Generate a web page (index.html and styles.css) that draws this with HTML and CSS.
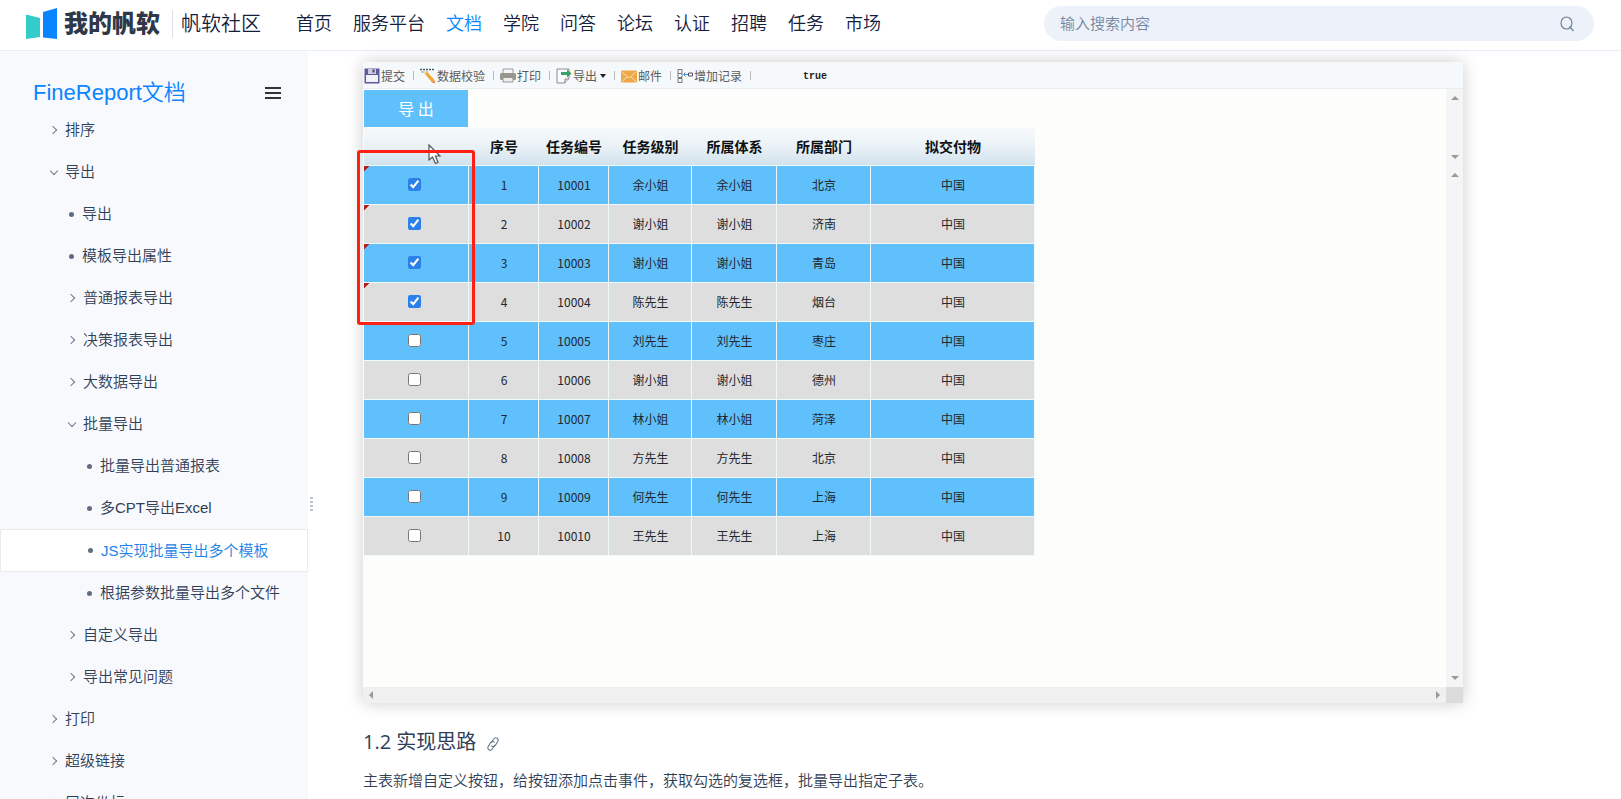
FILE: index.html
```html
<!DOCTYPE html>
<html lang="zh-CN">
<head>
<meta charset="utf-8">
<title>JS实现批量导出多个模板 - FineReport文档</title>
<link rel="stylesheet" href="styles.css">
</head>
<body>
<header class="topbar">
  <a class="brand" href="#">
    <svg class="brand-mark" width="32" height="32" viewBox="0 0 32 32" aria-hidden="true"><path d="M0 6.500L14 10V29L0 31Z" fill="#33cccb"/><path d="M17 4L31 0V31L17 29.500Z" fill="#0a84ff"/></svg>
    <span class="brand-name">我的帆软</span>
  </a>
  <a class="community" href="#">帆软社区</a>
  <nav class="nav">
    <a href="#">首页</a><a href="#">服务平台</a><a class="is-current" href="#">文档</a><a href="#">学院</a><a href="#">问答</a><a href="#">论坛</a><a href="#">认证</a><a href="#">招聘</a><a href="#">任务</a><a href="#">市场</a>
  </nav>
  <form class="search">
    <input type="text" placeholder="输入搜索内容" aria-label="输入搜索内容">
    <button type="button" aria-label="搜索"><svg width="14" height="16" viewBox="0 0 14 16" fill="none" stroke="#708299" stroke-width="1.200"><ellipse cx="6.500" cy="7" rx="5.500" ry="6"/><path d="M9.500 10.500L13.500 15"/></svg></button>
  </form>
</header>
<div class="page">
  <aside class="sidebar">
    <div class="side-head">
      <a class="side-title" href="#">FineReport文档</a>
      <button class="menu-btn" type="button" aria-label="菜单"><i></i><i></i><i></i></button>
    </div>
    <ul class="tree">
      <li><a class="node closed" href="#">排序</a></li>
      <li><a class="node open" href="#">导出</a>
        <ul>
          <li><a class="node leaf" href="#">导出</a></li>
          <li><a class="node leaf" href="#">模板导出属性</a></li>
          <li><a class="node closed" href="#">普通报表导出</a></li>
          <li><a class="node closed" href="#">决策报表导出</a></li>
          <li><a class="node closed" href="#">大数据导出</a></li>
          <li><a class="node open" href="#">批量导出</a>
            <ul>
              <li><a class="node leaf" href="#">批量导出普通报表</a></li>
              <li><a class="node leaf" href="#">多CPT导出Excel</a></li>
              <li><a class="node leaf is-active" href="#">JS实现批量导出多个模板</a></li>
              <li><a class="node leaf" href="#">根据参数批量导出多个文件</a></li>
            </ul>
          </li>
          <li><a class="node closed" href="#">自定义导出</a></li>
          <li><a class="node closed" href="#">导出常见问题</a></li>
        </ul>
      </li>
      <li><a class="node closed" href="#">打印</a></li>
      <li><a class="node closed" href="#">超级链接</a></li>
      <li><a class="node closed" href="#">层次坐标</a></li>
    </ul>
    <div class="grip"><i></i><i></i><i></i><i></i></div>
  </aside>
  <main class="content">
    <section class="frame">
      <div class="toolbar">
        <button type="button"><svg width="16" height="16" viewBox="0 0 16 16"><path d="M0.500 0.500h15v15h-15z" fill="#5d5b9a"/><path d="M2 7h12v7H2z" fill="#f1f2f8"/><path d="M4 1h8v5H4z" fill="#c9cbe2"/><path d="M8.500 1.500h2v3h-2z" fill="#45437f"/></svg>提交</button>
        <span class="sep"></span>
        <button type="button"><svg width="16" height="16" viewBox="0 0 16 16"><path d="M0 1.500h15" stroke="#45606e" stroke-width="1.500" stroke-dasharray="2 1"/><path d="M1 4h7" stroke="#5aa6d8"/><path d="M3 3.500L6 2.500L14.500 12L12 14.500Z" fill="#f0a838"/><path d="M3 3.500L6 2.500L7 4L4.500 6Z" fill="#f6dcae"/><path d="M12 14.500L14.500 12L15 15.500Z" fill="#e27b4c"/></svg>数据校验</button>
        <span class="sep"></span>
        <button type="button"><svg width="16" height="16" viewBox="0 0 16 16"><path d="M3 1h10v6H3z" fill="#f5f5f5" stroke="#9b9b94"/><rect y="5" width="16" height="7" rx="1.500" fill="#97978f"/><path d="M3 9.500h10V14H3z" fill="#eee" stroke="#97978f"/></svg>打印</button>
        <span class="sep"></span>
        <button type="button"><svg width="16" height="16" viewBox="0 0 16 16"><path d="M1 1h12v9l-4 5H1z" fill="#fafafa" stroke="#8b8b8b"/><path d="M9 15v-4h4" fill="#ddd" stroke="#8b8b8b"/><path d="M5 4h6V1.500L15.500 5.500L11 9.500V7H5z" fill="#35a068"/></svg>导出<svg class="caret" width="6" height="4" viewBox="0 0 6 4"><path d="M0 0h6L3 4z" fill="#222"/></svg></button>
        <span class="sep"></span>
        <button type="button"><svg width="16" height="16" viewBox="0 0 16 16"><rect y="2.500" width="16" height="12" rx="1" fill="#eea847"/><path d="M1 4L8 10L15 4M1 13.500L6 9M15 13.500L10 9" fill="none" stroke="#fbe2b8"/></svg>邮件</button>
        <span class="sep"></span>
        <button type="button"><svg width="16" height="16" viewBox="0 0 16 16" fill="none"><path d="M1 1.500h4v4H1zM1 5.500h4v4H1zM1 10.500h4v4H1z" stroke="#777"/><path d="M7 6.500h4M8.500 4.500L6.500 6.500L8.500 8.500" stroke="#3a8fdc"/><path d="M11.500 5h4v3h-4z" stroke="#556"/></svg>增加记录</button>
        <span class="sep"></span>
        <code class="flag">true</code>
      </div>
      <div class="report">
        <div class="sheet">
          <button class="export" type="button">导 出</button>
          <table class="grid">
            <colgroup><col class="c-pick"><col class="c-num"><col class="c-num"><col class="c-level"><col class="c-sys"><col class="c-dept"><col class="c-item"></colgroup>
            <thead><tr><th></th><th>序号</th><th>任务编号</th><th>任务级别</th><th>所属体系</th><th>所属部门</th><th>拟交付物</th></tr></thead>
            <tbody>
              <tr><td class="marked"><input type="checkbox" aria-label="选择 1" checked></td><td>1</td><td>10001</td><td>余小姐</td><td>余小姐</td><td>北京</td><td>中国</td></tr>
              <tr><td class="marked"><input type="checkbox" aria-label="选择 2" checked></td><td>2</td><td>10002</td><td>谢小姐</td><td>谢小姐</td><td>济南</td><td>中国</td></tr>
              <tr><td class="marked"><input type="checkbox" aria-label="选择 3" checked></td><td>3</td><td>10003</td><td>谢小姐</td><td>谢小姐</td><td>青岛</td><td>中国</td></tr>
              <tr><td class="marked"><input type="checkbox" aria-label="选择 4" checked></td><td>4</td><td>10004</td><td>陈先生</td><td>陈先生</td><td>烟台</td><td>中国</td></tr>
              <tr><td><input type="checkbox" aria-label="选择 5"></td><td>5</td><td>10005</td><td>刘先生</td><td>刘先生</td><td>枣庄</td><td>中国</td></tr>
              <tr><td><input type="checkbox" aria-label="选择 6"></td><td>6</td><td>10006</td><td>谢小姐</td><td>谢小姐</td><td>德州</td><td>中国</td></tr>
              <tr><td><input type="checkbox" aria-label="选择 7"></td><td>7</td><td>10007</td><td>林小姐</td><td>林小姐</td><td>菏泽</td><td>中国</td></tr>
              <tr><td><input type="checkbox" aria-label="选择 8"></td><td>8</td><td>10008</td><td>方先生</td><td>方先生</td><td>北京</td><td>中国</td></tr>
              <tr><td><input type="checkbox" aria-label="选择 9"></td><td>9</td><td>10009</td><td>何先生</td><td>何先生</td><td>上海</td><td>中国</td></tr>
              <tr><td><input type="checkbox" aria-label="选择 10"></td><td>10</td><td>10010</td><td>王先生</td><td>王先生</td><td>上海</td><td>中国</td></tr>
            </tbody>
          </table>
        </div>
        <div class="vbar">
          <div class="vbar-part vbar-top"><i class="up"></i><i class="down"></i></div>
          <div class="vbar-part vbar-rest"><i class="up"></i><i class="down"></i></div>
        </div>
      </div>
      <div class="hbar"><div class="htrack"><i class="left"></i><i class="right"></i></div><div class="corner"></div></div>
      <svg class="cursor" width="14" height="21" viewBox="0 0 14 21" aria-hidden="true"><path d="M1 1V16L4.500 13L7.500 19.500L10 18.500L7.500 12H12Z" fill="#fff" stroke="#555" stroke-width="1.200"/></svg>
      <div class="highlight"></div>
    </section>
    <h3 class="title">1.2 实现思路 <a href="#" aria-label="链接"><svg width="12" height="14" viewBox="0 0 12 14" fill="none" stroke="#66758c" stroke-width="1.100" stroke-linecap="round"><path d="M4.500 5.500L6.800 2a2.300 2.300 0 0 1 4 2.500L8.200 8.600a2.300 2.300 0 0 1-3.500 0.200"/><path d="M7.500 8.500L5.200 12a2.300 2.300 0 0 1-4-2.500L3.800 5.400a2.300 2.300 0 0 1 3.500-0.200"/></svg></a></h3>
    <p class="text">主表新增自定义按钮，给按钮添加点击事件，获取勾选的复选框，批量导出指定子表。</p>
  </main>
</div>
</body>
</html>
```

FILE: styles.css
```css
* { box-sizing: border-box; }
body {
  margin: 0;
  height: 100vh;
  overflow: hidden;
  display: flex;
  flex-direction: column;
  background: #fff;
  color: #303e56;
  font: 350 15px/24px "Liberation Sans", "Noto Sans CJK SC", sans-serif;
}
a { color: inherit; text-decoration: none; }
button, input { font: inherit; color: inherit; border: 0; padding: 0; background: none; }
ul { list-style: none; margin: 0; padding: 0; }

/* Top bar */
.topbar {
  flex: none;
  display: flex;
  align-items: center;
  height: 51px;
  padding: 0 27px 3px 26px;
  border-bottom: 1px solid #e6eff8;
  color: #14203c;
}
.brand { display: flex; align-items: center; gap: 6px; }
.brand-name { font-size: 24px; font-weight: 900; color: #2f3848; }
.community {
  margin-left: 12px;
  padding-left: 8px;
  border-left: 1px solid #d9e1ec;
  font-size: 20px;
  line-height: 28px;
}
.nav { display: flex; gap: 21px; margin-left: 35px; font-size: 18px; white-space: nowrap; }
.nav .is-current { color: #0a84ff; }
.search {
  display: flex;
  align-items: center;
  width: 550px;
  height: 35px;
  margin-left: auto;
  padding: 0 20px 0 16px;
  border-radius: 18px;
  background: #edf2fa;
}
.search input { flex: 1; outline: 0; }
.search input::placeholder { color: #74869f; }
.search button { display: flex; }

/* Sidebar */
.page { flex: 1; min-height: 0; display: flex; }
.sidebar { position: relative; flex: none; width: 308px; background: #f8f9fd; }
.side-head {
  display: flex;
  align-items: center;
  justify-content: space-between;
  padding: 25px 27px 0 33px;
}
.side-title { font-size: 22px; line-height: 33px; color: #0a84ff; }
.menu-btn { display: flex; flex-direction: column; gap: 3px; width: 16px; }
.menu-btn i { height: 2px; background: #333; }
.node { display: flex; align-items: center; height: 42px; padding-left: 47px; }
.tree ul .node { padding-left: 65px; }
.tree ul ul .node { padding-left: 83px; }
.node::before { content: ""; flex: none; }
.closed::before, .open::before {
  width: 5px;
  height: 5px;
  border: solid #6c7a90;
  border-width: 1px 1px 0 0;
}
.closed::before { margin: 0 9px 0 3px; transform: rotate(45deg); }
.open::before { margin: 0 8px 3px 4px; transform: rotate(135deg); }
.leaf::before { width: 5px; height: 5px; margin: 0 8px 0 4px; border-radius: 50%; background: #5f6d83; }
.tree .is-active { height: 43px; border: 1px solid #ebebed; background: #fff; color: #1b82e8; }
.grip {
  position: absolute;
  left: 310px;
  top: 446px;
  display: flex;
  flex-direction: column;
  gap: 2px;
}
.grip i { width: 3px; height: 2px; background: #bcc3d0; }

/* Article */
.content { flex: 1; min-width: 0; padding: 11px 55px 0; }
.frame {
  position: relative;
  max-width: 1100px;
  background: #fdfefc;
  box-shadow: 0 0 16px rgba(0, 0, 0, .2);
  font-family: "Noto Sans CJK SC", sans-serif;
  font-weight: 400;
}
.toolbar {
  display: flex;
  align-items: center;
  height: 27px;
  padding: 1px 0 0 1px;
  border-bottom: 1px solid #e9edf0;
  background: #f6f9fb;
  font-size: 12px;
  line-height: 16px;
  color: #5c5c5c;
}
.toolbar button { display: flex; align-items: center; gap: 1px; }
.toolbar .caret { margin-left: 2px; }
.sep { width: 1px; height: 9px; margin: 0 6px 0 8px; background: #bbb; }
.flag { margin: 2px 0 0 46px; font: 700 10px/16px "Liberation Mono", monospace; color: #222; }
.report { display: flex; height: 598px; }
.sheet { flex: 1; min-width: 0; padding: 1px; }
.export {
  display: block;
  width: 104px;
  height: 37px;
  margin-bottom: 1px;
  padding-bottom: 2px;
  background: #5fc0fc;
  color: #fff;
  font-size: 16px;
}
.grid {
  width: 671px;
  table-layout: fixed;
  border-collapse: collapse;
  font-size: 12px;
  line-height: 16px;
  text-align: center;
  color: #22272c;
}
.c-pick { width: 105px; }
.c-num { width: 70px; }
.c-level { width: 83px; }
.c-sys { width: 85px; }
.c-dept { width: 94px; }
.c-item { width: 164px; }
.grid th, .grid td { height: 39px; padding: 0 0 2px; box-shadow: inset -1px -1px #eefaf8; }
.grid th {
  height: 38px;
  font-size: 14px;
  font-weight: 700;
  color: #0e1114;
  box-shadow: inset 0 -1px #eefaf8;
  background: linear-gradient(#f7fafc, #e9f1f6 50%, #d0e1ec);
}
.grid tr:nth-child(odd) td { background-color: #5fc0fc; }
.grid tr:nth-child(even) td { background-color: #dedede; }
.grid td:first-child { padding-right: 4px; }
.grid .marked { background-image: linear-gradient(135deg, #b3201c 4px, transparent 4px); }
.grid input { display: block; width: 13px; height: 13px; margin: 0 auto; accent-color: #2b80ea; }
.vbar { width: 17px; display: flex; flex-direction: column; background: #f4f5f6; }
.vbar-part { display: flex; flex-direction: column; align-items: center; justify-content: space-between; padding: 7px 0; }
.vbar-top { height: 77px; }
.vbar-rest { flex: 1; }
.up, .down { border: solid transparent; border-width: 0 4px; }
.up { border-bottom: 4px solid #999; }
.down { border-top: 4px solid #999; }
.hbar { display: flex; height: 16px; background: #f0f0f0; }
.htrack { flex: 1; display: flex; align-items: center; justify-content: space-between; padding: 0 6px; }
.left, .right { border: solid transparent; border-width: 4px 0; }
.left { border-right: 4px solid #999; }
.right { border-left: 4px solid #999; }
.corner { width: 17px; background: #dcdcdc; }
.cursor { position: absolute; left: 65px; top: 82px; }
.highlight {
  position: absolute;
  left: -6px;
  top: 88px;
  width: 118px;
  height: 175px;
  border: 3px solid #ff2014;
  border-radius: 3px;
}
.title {
  display: flex;
  align-items: center;
  gap: 11px;
  margin: 24px 0 0;
  font: 400 20px/30px "Open Sans", "Noto Sans CJK SC", sans-serif;
}
.title a { display: flex; padding-top: 3px; }
.text { margin: 12px 0 0; }
```
